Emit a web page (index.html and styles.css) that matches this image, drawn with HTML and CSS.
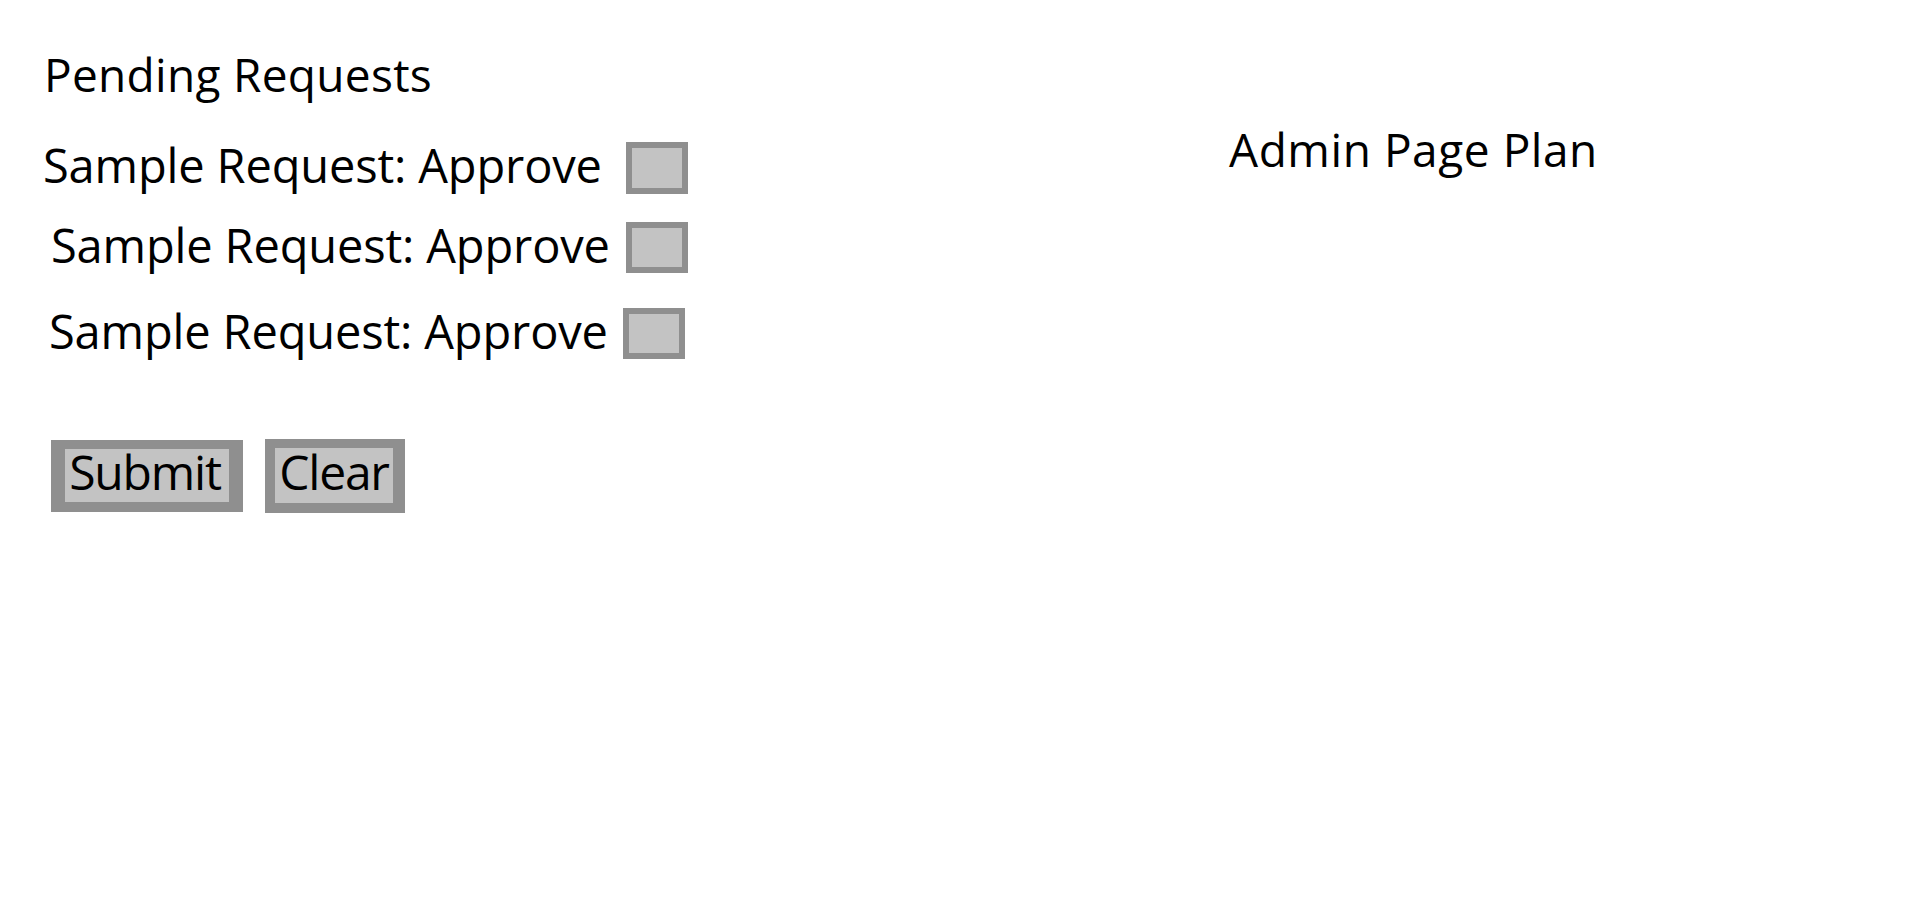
FILE: index.html
```html
<!DOCTYPE html>
<html lang="en">
<head>
<meta charset="utf-8">
<title>Admin Page Plan</title>
<link rel="stylesheet" href="styles.css">
</head>
<body>
<div class="page">
  <main class="requests">
    <h1 class="title">Pending Requests</h1>
    <form class="request-form">
      <div class="request-list">
        <label class="request">
          <span class="request-label">Sample Request: Approve</span>
          <input type="checkbox" class="approve">
        </label>
        <label class="request request-second">
          <span class="request-label">Sample Request: Approve</span>
          <input type="checkbox" class="approve">
        </label>
        <label class="request request-third">
          <span class="request-label">Sample Request: Approve</span>
          <input type="checkbox" class="approve">
        </label>
      </div>
      <div class="actions">
        <button type="button" class="btn btn-submit">Submit</button>
        <button type="button" class="btn btn-clear">Clear</button>
      </div>
    </form>
  </main>
  <aside class="plan">
    <h2 class="plan-title">Admin Page Plan</h2>
  </aside>
</div>
</body>
</html>
```
FILE: styles.css
```css
html, body {
  margin: 0;
  padding: 0;
  background: #ffffff;
}

body {
  font-family: "Open Sans", "Noto Sans", sans-serif;
  color: #000000;
}

.page {
  display: flex;
  align-items: flex-start;
  width: 1917px;
  height: 908px;
}

.requests {
  flex: 0 0 1187px;
  padding: 46px 0 0 42px;
}

.title {
  margin: 0;
  padding-left: 2px;
  font-size: 46px;
  font-weight: 400;
  line-height: 56px;
  letter-spacing: 0.3px;
}

.request-form {
  margin: 40px 0 0 0;
}

.request-list {
  display: flex;
  flex-direction: column;
}

.request {
  display: flex;
  align-items: flex-start;
  height: 52px;
}

.request + .request {
  margin-top: 28px;
}

.request-third {
  margin-top: 34px !important;
}

.request-label {
  box-sizing: border-box;
  width: 584px;
  padding-left: 1px;
  font-size: 47px;
  line-height: 46px;
  letter-spacing: -0.15px;
  white-space: nowrap;
}

.request-second .request-label {
  padding-left: 9px;
}

.request-third .request-label {
  padding-left: 7px;
  width: 581px;
}

.approve {
  appearance: none;
  -webkit-appearance: none;
  margin: 0;
  box-sizing: border-box;
  width: 62px;
  height: 52px;
  background: #c3c3c3;
  border: 6px solid #8f8f8f;
  border-radius: 0;
}

.request-second .approve,
.request-third .approve {
  height: 51px;
}

.actions {
  display: flex;
  align-items: flex-start;
  gap: 22px;
  margin-top: 79px;
  padding-left: 9px;
}

.btn {
  margin: 0;
  box-sizing: border-box;
  font-family: "Open Sans", "Noto Sans", sans-serif;
  font-size: 48px;
  letter-spacing: -1.2px;
  line-height: 45px;
  color: #000000;
  background: #c3c3c3;
  border-style: solid;
  border-color: #8f8f8f;
  border-radius: 0;
  text-align: center;
  white-space: nowrap;
}

.btn-submit {
  width: 192px;
  border-width: 9px 14px 10px 14px;
  padding: 0 4px 8px 0;
  margin-top: 1px;
}

.btn-clear {
  width: 140px;
  border-width: 9px 12px 10px 10px;
  padding: 1px 0 9px 0;
}

.plan {
  padding-top: 121px;
}

.plan-title {
  margin: 0;
  font-size: 46px;
  font-weight: 400;
  line-height: 56px;
  letter-spacing: 0.55px;
  white-space: nowrap;
}
```
